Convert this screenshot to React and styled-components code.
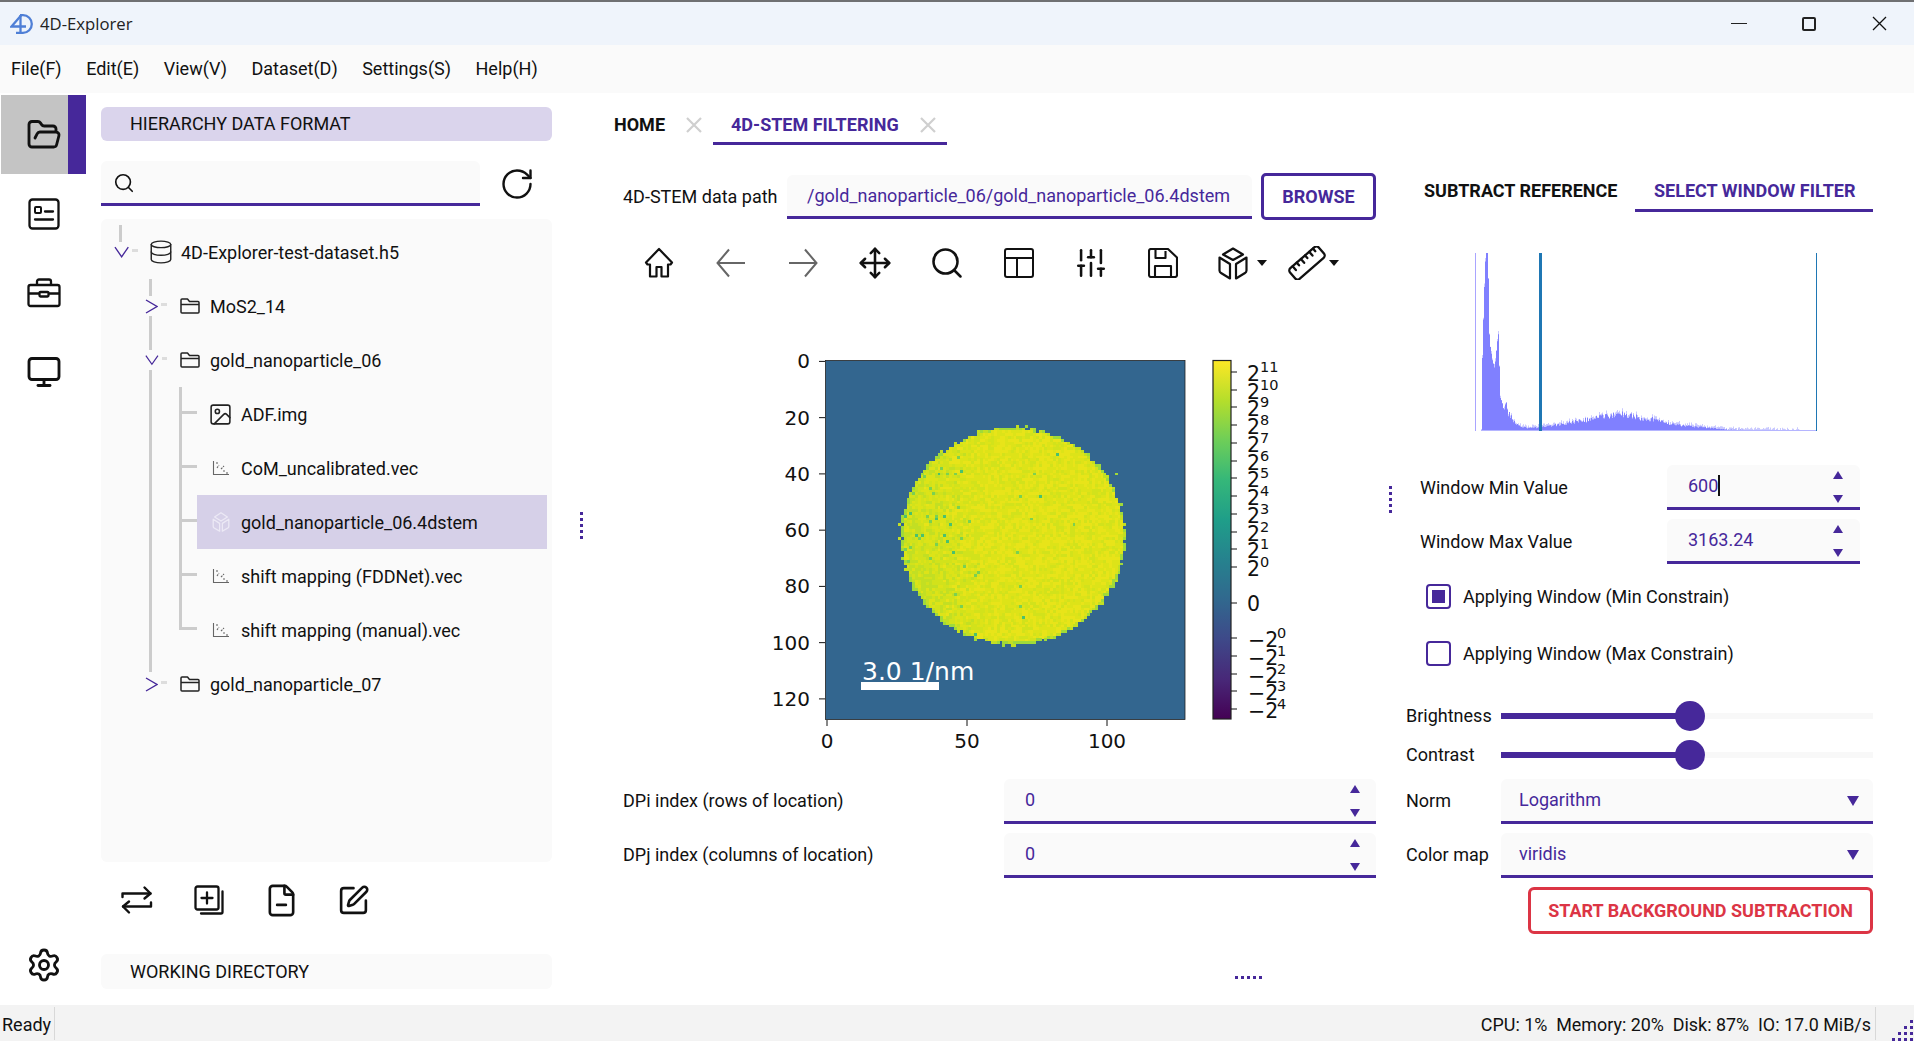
import React from "react";
import styled, { createGlobalStyle } from "styled-components";
import { FolderOpen, Monitor, Settings, Database, Image, Move, RotateCw, Search, SlidersVertical, FileMinus, SquarePen } from "lucide-react";

const purple = "#46289a";

const GlobalStyle = createGlobalStyle`
	html, body {
		margin: 0;
		padding: 0;
		background: #fff;
		overflow: hidden;
	}
	* {
		box-sizing: border-box;
	}
`;

// seeded noise, so the picture is the same on every load
function makeNoise(seed) {
	let s = seed;
	return () => {
		s = (s * 16807) % 2147483647;
		return (s - 1) / 2147483646;
	};
}

function buildDisc() {
	const rnd = makeNoise(4217);
	const buckets = { "#e8e419": "", "#dde318": "", "#d2e21b": "", "#c2df23": "", "#a0da39": "", "#7ad151": "", "#4ac16d": "" };
	const add = (col, c, r) => {
		const x = 825 + c * 2.8125;
		const y = 360 + r * 2.8125;
		buckets[col] += `M${x.toFixed(1)} ${y.toFixed(1)}h2.9v2.9h-2.9z`;
	};
	for (let r = 0; r < 128; r++) {
		for (let c = 0; c < 128; c++) {
			const d = Math.hypot((c + 0.5 - 66.8) / 40, (r + 0.5 - 62.6) / 38.6);
			if (d > 1 + (rnd() - 0.5) * 0.035) continue;
			if (d > 0.98) {
				add(rnd() < 0.6 ? "#a0da39" : "#c2df23", c, r);
				continue;
			}
			const leftness = Math.max(0, (60 - c) / 34);
			const downness = r > 70 && c < 60 ? 0.4 : 0;
			const v = 0.62 - leftness * 0.35 - downness * 0.1 + (rnd() - 0.5) * 0.6;
			if (rnd() < 0.055 * leftness + 0.004) {
				add(rnd() < 0.7 ? "#7ad151" : "#4ac16d", c, r);
			} else if (v > 0.66) add("#e8e419", c, r);
			else if (v > 0.44) add("#dde318", c, r);
			else if (v > 0.24) add("#d2e21b", c, r);
			else add("#c2df23", c, r);
		}
	}
	[[71, 23], [39, 34], [103, 40], [104, 75], [65, 24]].forEach(([c, r]) => add("#a0da39", c, r));
	return Object.entries(buckets);
}

const discCells = buildDisc();

// x and y are read off a 3x crop of the histogram
const histKnots = [
	[124, 600], [124.5, 445], [128, 300], [132, 170], [136, 68], [143, 68], [146, 300], [150, 350], [156, 390], [163, 415], [170, 340], [175, 305],
	[178, 460], [185, 490], [190, 540], [197, 510], [205, 540], [215, 555], [225, 575], [235, 585], [260, 590], [290, 590], [350, 580], [400, 570],
	[450, 560], [520, 545], [545, 540], [600, 555], [650, 560], [680, 575], [750, 585], [800, 590], [860, 597], [1000, 600], [1075, 601],
];

function buildHistogram() {
	const rnd = makeNoise(991);
	let solid = "";
	let soft = "";
	for (let x = 1481; x < 1800; x++) {
		const zx = (x - 1440) * 3;
		let i = 0;
		while (i < histKnots.length - 2 && histKnots[i + 1][0] < zx) i++;
		const [x0, y0] = histKnots[i];
		const [x1, y1] = histKnots[i + 1];
		const t = Math.min(1, Math.max(0, (zx - x0) / (x1 - x0)));
		const h = Math.max(0, (602 - (y0 + (y1 - y0) * t)) / 3);
		const jitter = h < 60 ? rnd() * h * 0.35 : 0;
		const base = Math.max(0, h - jitter);
		solid += `M${x} 431v${-base.toFixed(1)}h1v${base.toFixed(1)}z`;
		soft += `M${x} 431v${-(base + rnd() * 3.5).toFixed(1)}h1v${(base + 3.5).toFixed(1)}z`;
	}
	return { solid, soft };
}

const histogram = buildHistogram();

const viridisStops = ["#440154", "#482878", "#3e4989", "#31688e", "#26828e", "#1f9e89", "#35b779", "#6ece58", "#b5de2b", "#fde725"];

const cbarTicks = [
	[372, "11"], [390, "10"], [407, "9"], [425, "8"], [443, "7"], [461, "6"], [478, "5"], [496, "4"], [514, "3"], [532, "2"], [549, "1"], [567, "0"],
];
const cbarNegTicks = [[638, "0"], [656, "1"], [674, "2"], [691, "3"], [709, "4"]];

function ImagePlot() {
	return (
		<PlotSvg viewBox="610 340 766 420">
			<defs>
				<linearGradient id="viridis" x1="0" y1="1" x2="0" y2="0">
					{viridisStops.map((c, i) => (
						<stop key={c} offset={i / (viridisStops.length - 1)} stopColor={c} />
					))}
				</linearGradient>
			</defs>
			<rect x="825.5" y="360.5" width="359.500" height="359" fill="#33668f" />
			{discCells.map(([color, d]) => (
				<path key={color} d={d} fill={color} shapeRendering="crispEdges" />
			))}
			<rect x="825.5" y="360.5" width="359.500" height="359" fill="none" stroke="#222" strokeWidth="0.8" />
			<text x="862" y="680" fontSize="25" fill="#fff">3.0 1/nm</text>
			<rect x="861" y="682" width="78" height="8" fill="#fff" />
			{[0, 20, 40, 60, 80, 100, 120].map((v) => {
				const y = 361.4 + v * 2.8125;
				return (
					<g key={v}>
						<line x1="819" x2="825" y1={y} y2={y} stroke="#111" strokeWidth="1" />
						<text x="810" y={y + 7} fontSize="20" textAnchor="end" fill="#111">{v}</text>
					</g>
				);
			})}
			{[0, 50, 100].map((v) => {
				const x = 827 + v * 2.8;
				return (
					<g key={v}>
						<line x1={x} x2={x} y1="720" y2="726" stroke="#111" strokeWidth="1" />
						<text x={x} y="748" fontSize="20" textAnchor="middle" fill="#111">{v}</text>
					</g>
				);
			})}
			<rect x="1213" y="360.5" width="18" height="358.500" fill="url(#viridis)" stroke="#222" strokeWidth="1.200" />
			{cbarTicks.map(([y, exp]) => (
				<g key={exp}>
					<line x1="1231" x2="1237" y1={y} y2={y} stroke="#111" strokeWidth="1" />
					<text x="1247" y={y + 9} fontSize="20.500" fill="#111">2</text>
					<text x="1260" y={y} fontSize="14.500" fill="#111">{exp}</text>
				</g>
			))}
			<line x1="1231" x2="1237" y1="603" y2="603" stroke="#111" strokeWidth="1" />
			<text x="1247" y="611" fontSize="20.500" fill="#111">0</text>
			{cbarNegTicks.map(([y, exp]) => (
				<g key={exp}>
					<line x1="1231" x2="1237" y1={y} y2={y} stroke="#111" strokeWidth="1" />
					<text x="1248" y={y + 9} fontSize="20.500" fill="#111">−2</text>
					<text x="1277" y={y} fontSize="14.500" fill="#111">{exp}</text>
				</g>
			))}
		</PlotSvg>
	);
}

function Histogram() {
	return (
		<HistSvg viewBox="1404 253 469 178">
			<rect x="1475" y="253" width="1" height="178" fill="#a9a5ff" />
			<path d={histogram.soft} fill="#c9c9ff" />
			<path d={histogram.solid} fill="#8080ff" />
			<rect x="1481" y="430" width="335" height="1" fill="#b5b5ff" />
			<rect x="1539" y="253" width="3" height="178" fill="#1f77b4" />
			<rect x="1816" y="253" width="1" height="178" fill="#1f77b4" />
		</HistSvg>
	);
}

// ---- hand drawn icons, for the ones the packages don't carry

function Logo() {
	return (
		<svg width="24" height="20" viewBox="0 0 24 20" fill="none" stroke="#4f7fd6" strokeWidth="2.300">
			<path d="M11 1.500 1.500 12.500H16" />
			<path d="M10.500 1v18" />
			<path d="M10 1.200h3a8.800 8.800 0 0 1 0 17.600H6" />
		</svg>
	);
}

function IdCardIcon() {
	return (
		<svg width="32" height="32" viewBox="0 0 32 32" fill="none" stroke="#111" strokeWidth="2.300" strokeLinecap="round">
			<rect x="1.500" y="1.500" width="29" height="29" rx="3" />
			<rect x="7" y="9" width="6" height="6" rx="1" strokeWidth="2" />
			<path d="M17 13.500h8M7 21.500h18" />
		</svg>
	);
}

function ToolboxIcon() {
	return (
		<svg width="34" height="30" viewBox="0 0 34 30" fill="none" stroke="#111" strokeWidth="2.300" strokeLinejoin="round">
			<rect x="1.500" y="7" width="31" height="21" rx="2" />
			<path d="M10 7V3.500a2 2 0 0 1 2-2h10a2 2 0 0 1 2 2V7" />
			<path d="M1.500 15.500h11M21.500 15.500h11" />
			<rect x="12.500" y="14" width="9" height="4.500" rx="1" />
		</svg>
	);
}

function FolderIcon() {
	return (
		<svg width="20" height="18" viewBox="0 0 20 18" fill="none" stroke="#222" strokeWidth="1.500" strokeLinejoin="round">
			<path d="M1 3a1 1 0 0 1 1-1h5.500l2 2.500H18a1 1 0 0 1 1 1V15a1 1 0 0 1-1 1H2a1 1 0 0 1-1-1z" />
			<path d="M1 7.500h18" />
		</svg>
	);
}

function ScatterIcon() {
	return (
		<svg width="18" height="16" viewBox="0 0 18 16" fill="none" stroke="#666" strokeWidth="1.100">
			<path d="M1.500 1v13.500H17" />
			<path d="M5 2v3M5 8l2-3M9 9l3-3M11 11h3M15 12v2" strokeDasharray="2 1" />
		</svg>
	);
}

function PaleCubeIcon() {
	return (
		<svg width="22" height="22" viewBox="0 0 24 24" fill="none" stroke="#ece9f5" strokeWidth="1.400" strokeLinejoin="round">
			<path d="m12 2 7 4.500-7 4.500-7-4.500z" />
			<path d="M3.500 9 10.500 13.500V22L4.500 18.500a2 2 0 0 1-1-1.500z" />
			<path d="M20.500 9 13.500 13.500V22l6-3.500a2 2 0 0 0 1-1.500z" />
		</svg>
	);
}

function CubeIcon() {
	return (
		<svg width="30" height="33" viewBox="0 0 30 33" fill="none" stroke="#111" strokeWidth="2.200" strokeLinejoin="round">
			<path d="M15 1.500 25 7.500 15 13 5 7.500z" />
			<path d="M1.500 10.500 12 17v14.500L3 26a3 3 0 0 1-1.500-2.500z" />
			<path d="M28.500 10.500 18 17v14.500L27 26a3 3 0 0 0 1.500-2.500z" />
		</svg>
	);
}

function RulerIcon() {
	return (
		<svg width="38" height="34" viewBox="0 0 38 34" fill="none" stroke="#111" strokeWidth="2.300" strokeLinecap="round" strokeLinejoin="round">
			<g transform="rotate(-41 19 17)">
				<rect x="0" y="10" width="38" height="14" rx="3" />
				<path d="M6 10v5M11.500 10v3.500M17 10v5M22.500 10v3.500M28 10v5M33 10v3.500" />
			</g>
		</svg>
	);
}

function ExchangeIcon() {
	return (
		<svg width="32" height="30" viewBox="0 0 32 30" fill="none" stroke="#111" strokeWidth="2.400" strokeLinecap="round" strokeLinejoin="round">
			<path d="M1.500 12V8.500h28" />
			<path d="m23.500 2.500 6 6-6 5" />
			<path d="M30 17.500v4H2" />
			<path d="m8 27.500-6-6 6-5" />
		</svg>
	);
}

function StackPlusIcon() {
	return (
		<svg width="30" height="30" viewBox="0 0 30 30" fill="none" stroke="#111" strokeWidth="2.300" strokeLinejoin="round" strokeLinecap="round">
			<rect x="1.500" y="1.500" width="23" height="23" rx="2" />
			<path d="M13 7.500v11M7.500 13h11" />
			<path d="M28.500 6.500V27a1.500 1.500 0 0 1-1.500 1.500H7" />
		</svg>
	);
}

function HomeIcon() {
	return (
		<svg width="32" height="32" viewBox="0 0 32 32" fill="none" stroke="#111" strokeWidth="2.200" strokeLinejoin="round">
			<path d="M16 2 3 15.500l1.500 2H7V29.500h6.500V20h5v9.500H25V17.500h2.500l1.500-2z" />
		</svg>
	);
}

function LongArrow({ flip }) {
	return (
		<svg width="30" height="30" viewBox="0 0 30 30" fill="none" stroke="#666" strokeWidth="2" style={flip ? { transform: "scaleX(-1)" } : undefined}>
			<path d="M29 15H1.500M13 1.500 1.500 15 13 28.500" />
		</svg>
	);
}

function LayoutIcon() {
	return (
		<svg width="30" height="30" viewBox="0 0 30 30" fill="none" stroke="#111" strokeWidth="2">
			<rect x="1" y="1" width="28" height="28" rx="2" />
			<path d="M1 10h28M13 10v19" />
		</svg>
	);
}

function SaveIcon() {
	return (
		<svg width="30" height="30" viewBox="0 0 30 30" fill="none" stroke="#111" strokeWidth="2.100" strokeLinejoin="round">
			<path d="M3 1h17l9 8.500V27a2 2 0 0 1-2 2H3a2 2 0 0 1-2-2V3a2 2 0 0 1 2-2z" />
			<path d="M7.500 1v9h10V3M7 29V18h16v11" />
		</svg>
	);
}

function CloseMark() {
	return (
		<svg width="16" height="16" viewBox="0 0 16 16" fill="none" stroke="#cfcfcf" strokeWidth="2.200">
			<path d="M1 1l14 14M15 1 1 15" />
		</svg>
	);
}

function Chevron({ open }) {
	return open ? (
		<svg width="16" height="12" viewBox="0 0 16 12" fill="none" stroke={purple} strokeWidth="1.400">
			<path d="M1 1l7 10 7-10" />
		</svg>
	) : (
		<svg width="13" height="15" viewBox="0 0 13 15" fill="none" stroke={purple} strokeWidth="1.400">
			<path d="M1 1l11 6.500-11 6.500" />
		</svg>
	);
}

function GripDots() {
	const dots = [[18, 1], [12, 7], [18, 7], [6, 13], [12, 13], [18, 13], [0, 19], [6, 19], [12, 19], [18, 19]];
	return (
		<svg width="22" height="22" viewBox="0 0 22 22" fill={purple}>
			{dots.map(([x, y]) => (
				<rect key={`${x}-${y}`} x={x} y={y} width="3" height="3" />
			))}
		</svg>
	);
}

function SpinField({ value, caret, wide }) {
	return (
		<FieldBox $wide={wide}>
			<FieldValue>
				{value}
				{caret && <Caret />}
			</FieldValue>
			<Spinners $wide={wide}>
				<TriangleUp />
				<TriangleDown />
			</Spinners>
		</FieldBox>
	);
}

function Combo({ label, value }) {
	return (
		<ControlRow>
			<ControlLabel>{label}</ControlLabel>
			<ComboBox>
				<ComboValue>{value}</ComboValue>
				<ComboArrow />
			</ComboBox>
		</ControlRow>
	);
}

function SliderRow({ label, value }) {
	return (
		<ControlRow $slider>
			<ControlLabel>{label}</ControlLabel>
			<SliderTrack>
				<SliderFill style={{ width: `${value}%` }} />
				<SliderHandle style={{ left: `${value}%` }} />
			</SliderTrack>
		</ControlRow>
	);
}

function TreeItem({ level, open, toggle, icon, selected, children }) {
	return (
		<TreeRow $level={level} $selected={selected}>
			{toggle && (
				<Toggle $level={level}>
					<Chevron open={open} />
					<ToggleDash />
				</Toggle>
			)}
			<TreeIcon $level={level}>{icon}</TreeIcon>
			{children}
		</TreeRow>
	);
}

export default function App() {
	return (
		<Window>
			<GlobalStyle />
			<TitleBar>
				<Logo />
				<TitleText>4D-Explorer</TitleText>
				<WindowButtons>
					<WindowButton>
						<MinLine />
					</WindowButton>
					<WindowButton>
						<MaxBox />
					</WindowButton>
					<WindowButton>
						<svg width="15" height="15" viewBox="0 0 15 15" stroke="#111" strokeWidth="1.300">
							<path d="M1 1l13 13M14 1 1 14" />
						</svg>
					</WindowButton>
				</WindowButtons>
			</TitleBar>
			<MenuBar>
				{["File(F)", "Edit(E)", "View(V)", "Dataset(D)", "Settings(S)", "Help(H)"].map((m) => (
					<div key={m}>{m}</div>
				))}
			</MenuBar>
			<Body>
				<ActivityBar>
					<ActivityItem $active>
						<FolderOpen size={36} strokeWidth={1.9} color="#111" />
					</ActivityItem>
					<ActivityItem>
						<IdCardIcon />
					</ActivityItem>
					<ActivityItem>
						<ToolboxIcon />
					</ActivityItem>
					<ActivityItem>
						<Monitor size={36} strokeWidth={1.9} color="#111" />
					</ActivityItem>
					<GearSlot>
						<Settings size={36} strokeWidth={1.9} color="#111" />
					</GearSlot>
				</ActivityBar>

				<SidePanel>
					<SectionHeader $active>HIERARCHY DATA FORMAT</SectionHeader>
					<SearchRow>
						<SearchBox>
							<Search size={22} strokeWidth={1.8} color="#111" />
						</SearchBox>
						<RefreshButton>
							<RotateCw size={36} strokeWidth={1.6} color="#111" />
						</RefreshButton>
					</SearchRow>
					<TreePanel>
						<TreeItem level={0} open toggle icon={<Database size={26} strokeWidth={1.3} color="#222" />}>
							4D-Explorer-test-dataset.h5
						</TreeItem>
						<OuterBranch>
							<TreeItem level={1} toggle icon={<FolderIcon />}>MoS2_14</TreeItem>
							<TreeItem level={1} open toggle icon={<FolderIcon />}>gold_nanoparticle_06</TreeItem>
							<InnerBranch>
								<TreeItem level={2} icon={<Image size={25} strokeWidth={1.5} color="#222" />}>ADF.img</TreeItem>
								<TreeItem level={2} icon={<ScatterIcon />}>CoM_uncalibrated.vec</TreeItem>
								<TreeItem level={2} selected icon={<PaleCubeIcon />}>gold_nanoparticle_06.4dstem</TreeItem>
								<TreeItem level={2} icon={<ScatterIcon />}>shift mapping (FDDNet).vec</TreeItem>
								<TreeItem level={2} icon={<ScatterIcon />}>shift mapping (manual).vec</TreeItem>
							</InnerBranch>
							<TreeItem level={1} toggle icon={<FolderIcon />}>gold_nanoparticle_07</TreeItem>
						</OuterBranch>
					</TreePanel>
					<ActionRow>
						<ActionSlot><ExchangeIcon /></ActionSlot>
						<ActionSlot><StackPlusIcon /></ActionSlot>
						<ActionSlot><FileMinus size={35} strokeWidth={1.8} color="#111" /></ActionSlot>
						<ActionSlot><SquarePen size={33} strokeWidth={1.9} color="#111" /></ActionSlot>
					</ActionRow>
					<SectionHeader>WORKING DIRECTORY</SectionHeader>
				</SidePanel>

				<VSplitter>
					<DotColumn />
				</VSplitter>

				<CenterPane>
					<TabBar>
						<Tab>
							HOME
							<CloseMark />
						</Tab>
						<Tab $active $padLeft>
							4D-STEM FILTERING
							<CloseMark />
						</Tab>
					</TabBar>
					<PathRow>
						<PathLabel>4D-STEM data path</PathLabel>
						<PathField>/gold_nanoparticle_06/gold_nanoparticle_06.4dstem</PathField>
						<OutlineButton>BROWSE</OutlineButton>
					</PathRow>
					<Toolbar>
						<ToolSlot><HomeIcon /></ToolSlot>
						<ToolSlot><LongArrow /></ToolSlot>
						<ToolSlot><LongArrow flip /></ToolSlot>
						<ToolSlot><Move size={34} strokeWidth={1.8} color="#111" /></ToolSlot>
						<ToolSlot><Search size={36} strokeWidth={1.7} color="#111" /></ToolSlot>
						<ToolSlot><LayoutIcon /></ToolSlot>
						<ToolSlot><SlidersVertical size={34} strokeWidth={1.8} color="#111" /></ToolSlot>
						<ToolSlot><SaveIcon /></ToolSlot>
						<ToolSlot $shiftLeft>
							<CubeIcon />
							<MenuCaret />
						</ToolSlot>
						<ToolSlot>
							<RulerIcon />
							<MenuCaret />
						</ToolSlot>
					</Toolbar>
					<ImagePlot />
					<IndexRow $first>
						<IndexLabel>DPi index (rows of location)</IndexLabel>
						<SpinField value="0" wide />
					</IndexRow>
					<IndexRow>
						<IndexLabel>DPj index (columns of location)</IndexLabel>
						<SpinField value="0" wide />
					</IndexRow>
					<HDots />
				</CenterPane>

				<VSplitterRight>
					<DotColumn />
				</VSplitterRight>

				<RightPane>
					<RightTabs>
						<RightTab>SUBTRACT REFERENCE</RightTab>
						<RightTab $active>SELECT WINDOW FILTER</RightTab>
					</RightTabs>
					<Histogram />
					<WindowRow $first>
						<WindowLabel>Window Min Value</WindowLabel>
						<SpinField value="600" caret />
					</WindowRow>
					<WindowRow>
						<WindowLabel>Window Max Value</WindowLabel>
						<SpinField value="3163.24" />
					</WindowRow>
					<CheckRow $first>
						<CheckBox>
							<CheckFill />
						</CheckBox>
						Applying Window (Min Constrain)
					</CheckRow>
					<CheckRow>
						<CheckBox />
						Applying Window (Max Constrain)
					</CheckRow>
					<SliderGroup>
						<SliderRow label="Brightness" value={50.8} />
						<SliderRow label="Contrast" value={50.8} />
					</SliderGroup>
					<Combo label="Norm" value="Logarithm" />
					<Combo label="Color map" value="viridis" />
					<DangerButton>START BACKGROUND SUBTRACTION</DangerButton>
				</RightPane>
			</Body>
			<StatusBar>
				<StatusReady>Ready</StatusReady>
				<StatusInfo>CPU: 1%&nbsp;&nbsp;Memory: 20%&nbsp;&nbsp;Disk: 87%&nbsp;&nbsp;IO: 17.0 MiB/s</StatusInfo>
				<GripSlot>
					<GripDots />
				</GripSlot>
			</StatusBar>
		</Window>
	);
}

const Window = styled.div`
	display: flex;
	flex-direction: column;
	width: 1914px;
	height: 1041px;
	background: #fff;
	color: #111;
	font-family: Roboto, "Liberation Sans", sans-serif;
	font-size: 18px;
	overflow: hidden;
`;

const TitleBar = styled.div`
	display: flex;
	align-items: center;
	height: 45px;
	flex: none;
	padding-left: 10px;
	background: #eff4fb;
	border-top: 2px solid #6f7072;
`;

const TitleText = styled.div`
	margin-left: 6px;
	padding-bottom: 1px;
	font-family: "Open Sans", sans-serif;
	font-size: 16.700px;
	color: #222;
`;

const WindowButtons = styled.div`
	display: flex;
	margin-left: auto;
`;

const WindowButton = styled.div`
	display: flex;
	align-items: center;
	justify-content: center;
	width: 70px;
	height: 43px;
`;

const MinLine = styled.div`
	width: 16px;
	height: 1.500px;
	background: #222;
`;

const MaxBox = styled.div`
	width: 14px;
	height: 14px;
	border: 2px solid #222;
	border-radius: 2px;
`;

const MenuBar = styled.div`
	display: flex;
	align-items: center;
	gap: 24.500px;
	height: 48px;
	flex: none;
	padding: 0 0 2px 11px;
	background: #fafafa;
`;

const Body = styled.div`
	display: flex;
	flex: 1;
	min-height: 0;
`;

const ActivityBar = styled.div`
	display: flex;
	flex-direction: column;
	width: 87px;
	flex: none;
	padding: 2px 0 22px 1px;
`;

const ActivityItem = styled.div`
	display: flex;
	align-items: center;
	justify-content: center;
	height: 79px;
	width: 85px;
	background: ${(p) => (p.$active ? "#c4c4c4" : "transparent")};
	box-shadow: ${(p) => (p.$active ? `inset -18px 0 0 ${purple}` : "none")};
`;

const GearSlot = styled.div`
	display: flex;
	justify-content: center;
	width: 85px;
	margin-top: auto;
`;

const SidePanel = styled.div`
	display: flex;
	flex-direction: column;
	width: 451px;
	margin-left: 14px;
	flex: none;
	padding-top: 14px;
`;

const SectionHeader = styled.div`
	display: flex;
	align-items: center;
	height: ${(p) => (p.$active ? 34 : 35)}px;
	padding: 0 0 ${(p) => (p.$active ? 2 : 0)}px 29px;
	border-radius: 6px;
	background: ${(p) => (p.$active ? "#dad4ec" : "#fafafa")};
`;

const SearchRow = styled.div`
	display: flex;
	align-items: center;
	margin-top: 20px;
`;

const SearchBox = styled.div`
	display: flex;
	align-items: center;
	width: 379px;
	height: 45px;
	padding: 2px 0 0 12px;
	background: #fafafa;
	border-radius: 6px 6px 0 0;
	border-bottom: 3px solid ${purple};
`;

const RefreshButton = styled.div`
	display: flex;
	margin-left: 19px;
`;

const TreePanel = styled.div`
	height: 643px;
	margin-top: 13px;
	padding-top: 6px;
	background: #fafafa;
	border-radius: 6px;
`;

const OuterBranch = styled.div`
	position: relative;
	&::before {
		content: "";
		position: absolute;
		left: 48px;
		top: 0;
		bottom: 39px;
		width: 3px;
		background: #ccc;
	}
`;

const InnerBranch = styled.div`
	position: relative;
	&::before {
		content: "";
		position: absolute;
		left: 78px;
		top: 0;
		bottom: 29px;
		width: 3px;
		background: #ccc;
	}
`;

const TreeRow = styled.div`
	position: relative;
	display: flex;
	align-items: center;
	height: 54px;
	padding-left: ${(p) => (p.$level === 0 ? 13 : p.$level === 1 ? 42 : 14)}px;
	margin-left: ${(p) => (p.$level === 2 ? 96 : 0)}px;
	margin-right: ${(p) => (p.$level === 2 ? 5 : 0)}px;
	background: ${(p) => (p.$selected ? "#d6d0e8" : "transparent")};
	${(p) =>
		p.$level === 2 &&
		`&::before {
			content: "";
			position: absolute;
			left: -18px;
			top: 24px;
			width: 18px;
			height: 3px;
			background: #ccc;
		}`}
	${(p) =>
		p.$level === 0 &&
		`&::before {
			content: "";
			position: absolute;
			left: 18px;
			top: 0;
			width: 3px;
			height: 17px;
			background: #ccc;
		}`}
`;

const Toggle = styled.div`
	position: relative;
	z-index: 1;
	display: flex;
	align-items: center;
	gap: 3px;
	width: 24px;
	height: 20px;
	margin-right: ${(p) => (p.$level === 0 ? 12 : 13)}px;
	background: #fafafa;
	padding-left: ${(p) => (p.$level === 1 ? 2 : 0)}px;
`;

const ToggleDash = styled.div`
	width: 6px;
	height: 3px;
	background: #ddd;
	margin-bottom: 4px;
`;

const TreeIcon = styled.div`
	display: flex;
	align-items: center;
	justify-content: center;
	flex: none;
	width: ${(p) => (p.$level === 0 ? 21 : 19)}px;
	margin-right: ${(p) => (p.$level === 0 ? 10 : 11)}px;
	& > svg {
		flex: none;
	}
`;

const ActionRow = styled.div`
	display: flex;
	align-items: center;
	height: 72px;
	margin-bottom: 20px;
	padding-top: 4px;
`;

const ActionSlot = styled.div`
	display: flex;
	align-items: center;
	justify-content: center;
	width: 72px;
`;

const VSplitter = styled.div`
	display: flex;
	align-items: center;
	justify-content: center;
	width: 58px;
	flex: none;
	height: 864px;
`;

const VSplitterRight = styled(VSplitter)`
	width: 28px;
	height: 812px;
`;

const DotColumn = styled.div`
	width: 3px;
	height: 27px;
	background: repeating-linear-gradient(to bottom, ${purple} 0 3px, transparent 3px 6px);
`;

const HDots = styled.div`
	align-self: flex-end;
	width: 28px;
	height: 3px;
	margin-top: 98px;
	margin-right: 113px;
	background: repeating-linear-gradient(to right, ${purple} 0 3px, transparent 3px 6px);
`;

const CenterPane = styled.div`
	display: flex;
	flex-direction: column;
	width: 766px;
	flex: none;
`;

const TabBar = styled.div`
	display: flex;
	height: 38px;
	margin-top: 14px;
`;

const Tab = styled.div`
	display: flex;
	align-items: center;
	gap: 21px;
	height: 38px;
	padding: 0 11px 0 ${(p) => (p.$padLeft ? 18 : 4)}px;
	font-weight: 700;
	color: ${(p) => (p.$active ? purple : "#111")};
	border-bottom: 3px solid ${(p) => (p.$active ? purple : "transparent")};
`;

const PathRow = styled.div`
	display: flex;
	align-items: center;
	margin-top: 28px;
	padding-left: 13px;
	height: 47px;
`;

const PathLabel = styled.div`
	width: 164px;
`;

const PathField = styled.div`
	display: flex;
	align-items: center;
	width: 465px;
	height: 44px;
	padding-left: 20px;
	background: #fafafa;
	border-radius: 6px 6px 0 0;
	border-bottom: 3px solid ${purple};
	color: ${purple};
`;

const OutlineButton = styled.div`
	display: flex;
	align-items: center;
	justify-content: center;
	width: 115px;
	height: 47px;
	margin-left: 9px;
	border: 3px solid ${purple};
	border-radius: 5px;
	color: ${purple};
	font-weight: 700;
`;

const Toolbar = styled.div`
	display: flex;
	margin-top: 25px;
	height: 36px;
	padding-left: 13px;
`;

const ToolSlot = styled.div`
	position: relative;
	display: flex;
	align-items: center;
	justify-content: center;
	width: 72px;
	height: 36px;
	padding-right: ${(p) => (p.$shiftLeft ? 4 : 0)}px;
`;

const MenuCaret = styled.div`
	position: absolute;
	right: 4px;
	top: 15px;
	width: 0;
	height: 0;
	border-left: 5.500px solid transparent;
	border-right: 5.500px solid transparent;
	border-top: 6px solid #111;
`;

const PlotSvg = styled.svg`
	display: block;
	flex: none;
	width: 766px;
	height: 420px;
	margin-top: 59px;
	font-family: "DejaVu Sans", sans-serif;
`;

const IndexRow = styled.div`
	display: flex;
	align-items: center;
	height: 45px;
	margin-top: ${(p) => (p.$first ? 19 : 9)}px;
	padding-left: 13px;
`;

const IndexLabel = styled.div`
	width: 381px;
	padding-bottom: 2px;
`;

const FieldBox = styled.div`
	position: relative;
	display: flex;
	align-items: center;
	width: ${(p) => (p.$wide ? 372 : 193)}px;
	height: 45px;
	background: #fafafa;
	border-radius: 6px 6px 0 0;
	border-bottom: 3px solid ${purple};
`;

const FieldValue = styled.div`
	display: flex;
	align-items: center;
	padding: 0 0 2px 21px;
	color: ${purple};
`;

const Caret = styled.span`
	display: inline-block;
	width: 2px;
	height: 21px;
	background: #111;
`;

const Spinners = styled.div`
	position: absolute;
	right: ${(p) => (p.$wide ? 16 : 17)}px;
	top: 6px;
	display: flex;
	flex-direction: column;
	gap: 16px;
`;

const TriangleUp = styled.div`
	width: 0;
	height: 0;
	border-left: 5px solid transparent;
	border-right: 5px solid transparent;
	border-bottom: 8px solid ${purple};
`;

const TriangleDown = styled.div`
	width: 0;
	height: 0;
	border-left: 5px solid transparent;
	border-right: 5px solid transparent;
	border-top: 8px solid ${purple};
`;

const RightPane = styled.div`
	display: flex;
	flex-direction: column;
	width: 469px;
	flex: none;
	padding-top: 79px;
`;

const RightTabs = styled.div`
	display: flex;
	height: 40px;
`;

const RightTab = styled.div`
	display: flex;
	align-items: center;
	height: 40px;
	width: ${(p) => (p.$active ? 238 : 231)}px;
	padding-left: ${(p) => (p.$active ? 19 : 20)}px;
	font-weight: 700;
	color: ${(p) => (p.$active ? purple : "#111")};
	border-bottom: 3px solid ${(p) => (p.$active ? purple : "transparent")};
`;

const HistSvg = styled.svg`
	display: block;
	flex: none;
	width: 469px;
	height: 178px;
	margin-top: 41px;
`;

const WindowRow = styled.div`
	display: flex;
	align-items: center;
	height: 45px;
	margin-top: ${(p) => (p.$first ? 34 : 9)}px;
	padding-left: 16px;
`;

const WindowLabel = styled.div`
	width: 247px;
`;

const CheckRow = styled.div`
	display: flex;
	align-items: center;
	gap: 12px;
	height: 25px;
	margin-top: ${(p) => (p.$first ? 20 : 32)}px;
	padding-left: 22px;
`;

const CheckBox = styled.div`
	display: flex;
	align-items: center;
	justify-content: center;
	width: 25px;
	height: 25px;
	border: 2px solid ${purple};
	border-radius: 4px;
`;

const CheckFill = styled.div`
	width: 13px;
	height: 13px;
	background: ${purple};
`;

const SliderGroup = styled.div`
	display: flex;
	flex-direction: column;
	gap: 9px;
	margin-top: 35px;
	margin-bottom: 9px;
`;

const ControlRow = styled.div`
	display: flex;
	align-items: center;
	height: ${(p) => (p.$slider ? 30 : 45)}px;
	padding-left: 2px;
	margin-bottom: ${(p) => (p.$slider ? 0 : 9)}px;
`;

const ControlLabel = styled.div`
	width: 95px;
	flex: none;
	padding-bottom: 2px;
`;

const SliderTrack = styled.div`
	position: relative;
	flex: 1;
	height: 6px;
	background: #f8f8f8;
`;

const SliderFill = styled.div`
	height: 100%;
	background: ${purple};
`;

const SliderHandle = styled.div`
	position: absolute;
	top: -12px;
	width: 30px;
	height: 30px;
	margin-left: -15px;
	border-radius: 50%;
	background: ${purple};
`;

const ComboBox = styled.div`
	display: flex;
	align-items: center;
	justify-content: space-between;
	flex: 1;
	height: 45px;
	padding: 0 14px 0 18px;
	background: #fafafa;
	border-radius: 6px 6px 0 0;
	border-bottom: 3px solid ${purple};
	color: ${purple};
`;

const ComboValue = styled.div`
	padding-bottom: 2px;
`;

const ComboArrow = styled.div`
	width: 0;
	height: 0;
	margin-top: 2px;
	border-left: 6px solid transparent;
	border-right: 6px solid transparent;
	border-top: 10px solid ${purple};
`;

const DangerButton = styled.div`
	display: flex;
	align-items: center;
	justify-content: center;
	align-self: flex-end;
	width: 345px;
	height: 47px;
	border: 3px solid #dc3545;
	border-radius: 6px;
	color: #dc3545;
	font-weight: 700;
`;

const StatusBar = styled.div`
	display: flex;
	align-items: center;
	height: 36px;
	flex: none;
	padding-left: 2px;
	background: #f3f3f3;
`;

const StatusReady = styled.div`
	display: flex;
	align-items: center;
	width: 53px;
	height: 33px;
	padding-top: 3px;
	border-right: 1px solid #d8d8d8;
`;

const StatusInfo = styled.div`
	display: flex;
	align-items: center;
	height: 33px;
	margin-left: auto;
	padding: 3px 4px 0 0;
	font-size: 17.900px;
	border-right: 1px solid #d8d8d8;
`;

const GripSlot = styled.div`
	display: flex;
	align-self: flex-end;
	width: 38px;
	justify-content: flex-end;
`;
